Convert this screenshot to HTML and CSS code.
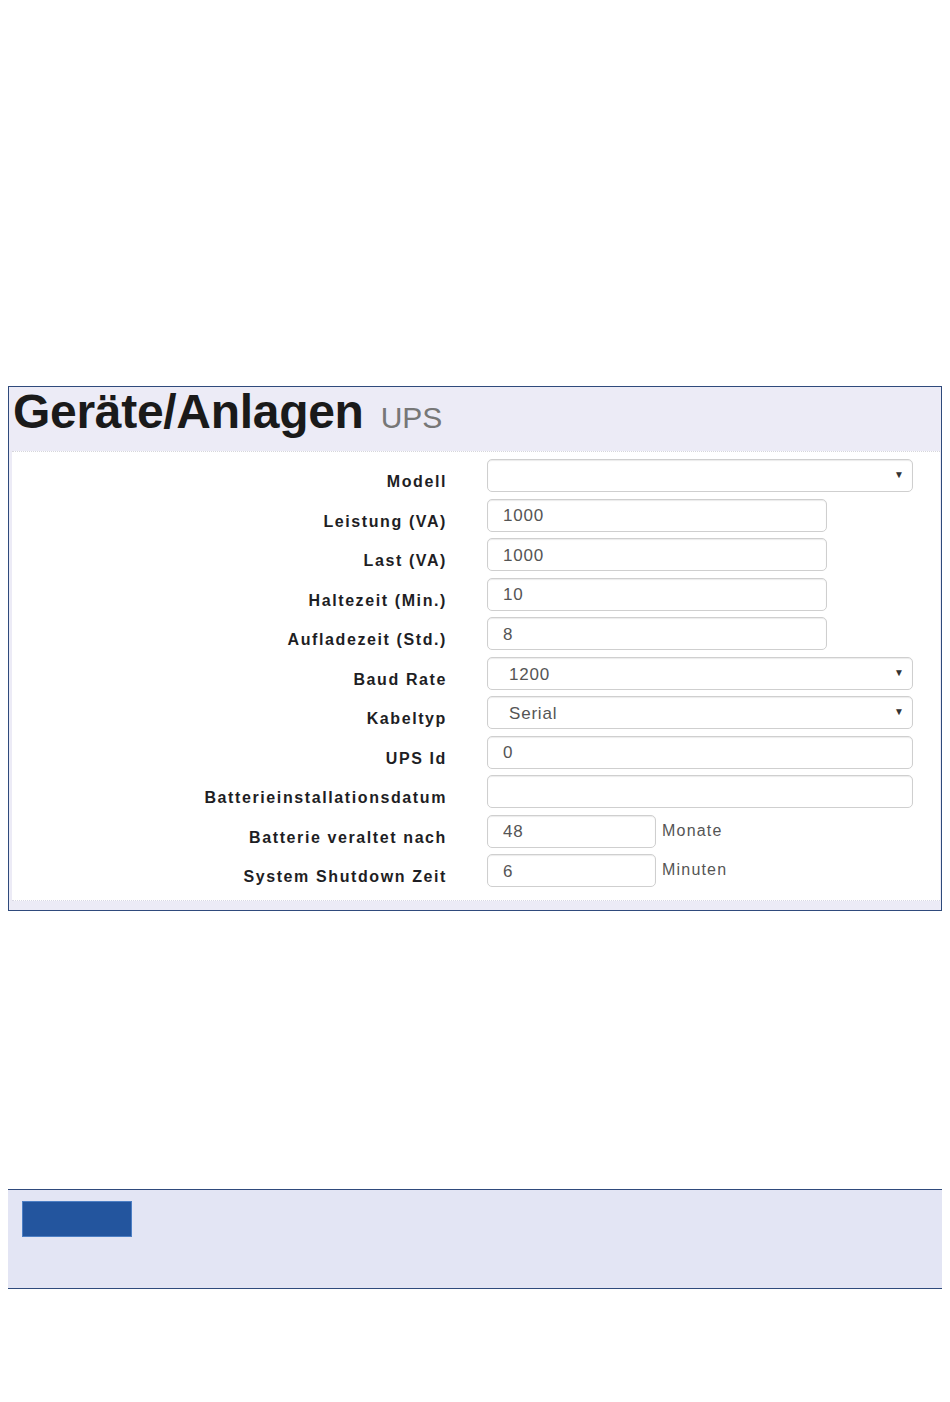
FILE: index.html
```html
<!DOCTYPE html>
<html lang="de">
<head>
  <meta charset="UTF-8" />
  <title>Geräte/Anlagen UPS</title>
  <link rel="stylesheet" href="styles.css">
</head>
<body>
  <div class="panel">
    <h1>Geräte/Anlagen <small>UPS</small></h1>

    <!-- UPS settings form -->
    <div class="form">
      <label>Modell</label>
      <div class="select"><select></select></div>

      <label>Leistung (VA)</label>
      <input class="mid" type="text" value="1000" />

      <label>Last (VA)</label>
      <input class="mid" type="text" value="1000" />

      <label>Haltezeit (Min.)</label>
      <input class="mid" type="text" value="10" />

      <label>Aufladezeit (Std.)</label>
      <input class="mid" type="text" value="8" />

      <label>Baud Rate</label>
      <div class="select"><select><option>1200</option></select></div>

      <label>Kabeltyp</label>
      <div class="select"><select><option>Serial</option></select></div>

      <label>UPS Id</label>
      <input type="text" value="0" />

      <label>Batterieinstallationsdatum</label>
      <input type="text" value="" />

      <label>Batterie veraltet nach</label>
      <div class="unit"><input class="short" type="text" value="48" /><span>Monate</span></div>

      <label>System Shutdown Zeit</label>
      <div class="unit"><input class="short" type="text" value="6" /><span>Minuten</span></div>
    </div>
  </div>

  <div class="toolbar">
    <button class="save"></button>
  </div>
</body>
</html>
```

FILE: styles.css
```css
body {
  margin: 8px;
  background: #fff;
  font-family: "Liberation Sans", Arial, sans-serif;
  color: #222;
}
.panel {
  margin-top: 378px;
  border: 1px solid #2f4a7c;
  background: #ecebf6;
  padding: 0 1px 9px 3px;
}
h1 {
  margin: 0 0 14px;
  padding-left: 1px;
  height: 50px;
  font-size: 48px;
  line-height: 50px;
  font-weight: bold;
  letter-spacing: -0.3px;
  color: #1a1a1a;
  white-space: nowrap;
}
h1 small {
  font-size: 30px;
  line-height: 0;
  font-weight: normal;
  color: #777;
  letter-spacing: 0;
  margin-left: 4px;
}
.form {
  background: #fff;
  border-top: 1px dotted #d6d6dc;
  border-bottom: 1px dotted #d8d8e4;
  padding: 7px 27px 13px 0;
  display: grid;
  grid-template-columns: 434px 1fr;
  column-gap: 41px;
  row-gap: 6.5px;
}
label {
  text-align: right;
  font-size: 16px;
  font-weight: bold;
  letter-spacing: 1.6px;
  line-height: 20px;
  padding-top: 13px;
  color: #1e1e24;
  margin-right: -1px;
}
input, select {
  box-sizing: border-box;
  height: 33px;
  width: 100%;
  border: 1px solid #cfcfcf;
  border-radius: 5px;
  box-shadow: inset 0 1px 1px rgba(0, 0, 0, 0.08);
  background: #fff;
  font-family: "Liberation Sans", Arial, sans-serif;
  font-size: 17px;
  letter-spacing: 0.8px;
  color: #555;
  padding: 2px 16px 0 15px;
  margin: 0;
}
input.mid {
  width: 340px;
}
input.short {
  width: 169px;
}
.select {
  position: relative;
}
.select select {
  appearance: none;
  -webkit-appearance: none;
  padding-left: 21px;
}
.select::after {
  content: "\25BC";
  position: absolute;
  right: 9px;
  top: 10px;
  font-size: 10px;
  color: #333;
  pointer-events: none;
}
.unit {
  display: flex;
  align-items: flex-start;
  gap: 6px;
}
.unit span {
  font-size: 16px;
  letter-spacing: 1.2px;
  color: #555;
  padding-top: 7px;
}
.toolbar {
  margin-top: 278px;
  border-top: 1px solid #2f4a7c;
  border-bottom: 1px solid #2f4a7c;
  background: #e3e5f4;
  padding: 11px 0 0 14px;
  box-sizing: border-box;
  height: 100px;
}
.save {
  display: block;
  width: 110px;
  height: 36px;
  background: #23559e;
  border: 1px solid #4d7fc4;
  padding: 0;
}
```
